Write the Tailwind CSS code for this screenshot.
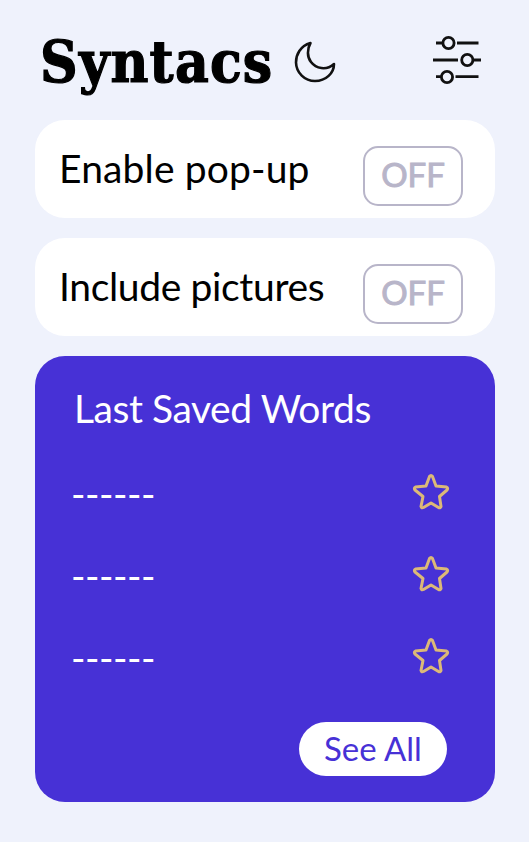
<!DOCTYPE html>
<html lang="en">
<head>
<meta charset="utf-8">
<title>Syntacs</title>
<script src="https://cdn.jsdelivr.net/npm/@tailwindcss/browser@4"></script>
</head>
<body class="bg-[#eff2fc] font-['Lato',sans-serif]">
<main class="flex h-[842px] w-[529px] flex-col gap-5 pr-[34px] pl-[35px] text-black">
  <header class="flex h-[100px] pl-[5px]">
    <h1 class="mt-[28px] w-[241px] whitespace-nowrap font-['DejaVu_Serif_Condensed','DejaVu_Serif',serif] text-[58px] font-bold leading-[68px] tracking-[1.2px] [font-stretch:condensed] [-webkit-text-stroke:1.2px_black]">Syntacs</h1>
    <svg class="mt-[32px] ml-[4px] h-[60px] w-[60px] shrink-0" viewBox="0 0 60 60" fill="none" stroke="#111" stroke-width="2.6" stroke-linejoin="round"><path d="M25.500 11C15 14 11 23 11 30.500A19 19 0 0 0 30 49C41 49 49 41 49 32C41 39 31 36.500 26 30C22 25 22 17 25.500 11Z"/></svg>
    <svg class="mt-[25px] ml-auto mr-[6px] h-[64px] w-[64px] shrink-0" viewBox="0 0 64 64" fill="none" stroke="#111" stroke-width="2.8"><path d="M11 18H17M32 18H53.500M8 35H33M48 35H56M11 51.700H16M30.500 51.700H53.500"/><circle cx="23.500" cy="18" r="5.600"/><circle cx="42.300" cy="35" r="5.600"/><circle cx="22" cy="52" r="5.600"/></svg>
  </header>
  <section class="flex h-[98px] items-start justify-between rounded-[30px] bg-white pt-[26px] pr-8 pl-[24px]">
    <span class="whitespace-nowrap text-[39px] leading-[44px] tracking-[0.15px]">Enable pop-up</span>
    <button class="h-[60px] w-[100px] rounded-[15px] border-2 border-[#b8b5c9] pb-1 text-[33px] leading-[52px] text-[#b8b5c9] [-webkit-text-stroke:1px_#b8b5c9]">OFF</button>
  </section>
  <section class="flex h-[98px] items-start justify-between rounded-[30px] bg-white pt-[26px] pr-8 pl-[24px]">
    <span class="whitespace-nowrap text-[39px] leading-[44px] tracking-[-0.35px]">Include pictures</span>
    <button class="h-[60px] w-[100px] rounded-[15px] border-2 border-[#b8b5c9] pb-1 text-[33px] leading-[52px] text-[#b8b5c9] [-webkit-text-stroke:1px_#b8b5c9]">OFF</button>
  </section>
  <section class="flex h-[446px] flex-col rounded-[30px] bg-[#4731d6] pt-[29px] text-white">
    <h2 class="pl-[39px] text-[39px] leading-[46px] tracking-[-0.45px]">Last Saved Words</h2>
    <ul class="mt-[20px] pr-[44px] pl-[36px]">
      <li class="flex h-[82px] items-center justify-between"><span class="pt-0.5 text-[39px] leading-[46px] tracking-[-0.5px]">------</span><svg class="h-10 w-10" viewBox="0 0 40 40" fill="none" stroke="#dcb978" stroke-width="3" stroke-linejoin="round"><path d="M18.500 4.500Q20 2.500 21.500 4.500L25 14L35.500 15Q37.500 16 36 18L28.500 24.500L30 34.500Q29 36.500 27.500 35.500L20 31L12.500 35.500Q10.500 36.500 10 34.500L12 24.500L4 18Q2.500 16 4.500 15L15 14Z"/></svg></li>
      <li class="flex h-[82px] items-center justify-between"><span class="pt-0.5 text-[39px] leading-[46px] tracking-[-0.5px]">------</span><svg class="h-10 w-10" viewBox="0 0 40 40" fill="none" stroke="#dcb978" stroke-width="3" stroke-linejoin="round"><path d="M18.500 4.500Q20 2.500 21.500 4.500L25 14L35.500 15Q37.500 16 36 18L28.500 24.500L30 34.500Q29 36.500 27.500 35.500L20 31L12.500 35.500Q10.500 36.500 10 34.500L12 24.500L4 18Q2.500 16 4.500 15L15 14Z"/></svg></li>
      <li class="flex h-[82px] items-center justify-between"><span class="pt-0.5 text-[39px] leading-[46px] tracking-[-0.5px]">------</span><svg class="h-10 w-10" viewBox="0 0 40 40" fill="none" stroke="#dcb978" stroke-width="3" stroke-linejoin="round"><path d="M18.500 4.500Q20 2.500 21.500 4.500L25 14L35.500 15Q37.500 16 36 18L28.500 24.500L30 34.500Q29 36.500 27.500 35.500L20 31L12.500 35.500Q10.500 36.500 10 34.500L12 24.500L4 18Q2.500 16 4.500 15L15 14Z"/></svg></li>
    </ul>
    <button class="mt-[25px] mr-12 h-[54px] w-[148px] self-end rounded-full bg-white pb-0.5 text-[33px] leading-[52px] text-[#4731d6]">See All</button>
  </section>
</main>
</body>
</html>
